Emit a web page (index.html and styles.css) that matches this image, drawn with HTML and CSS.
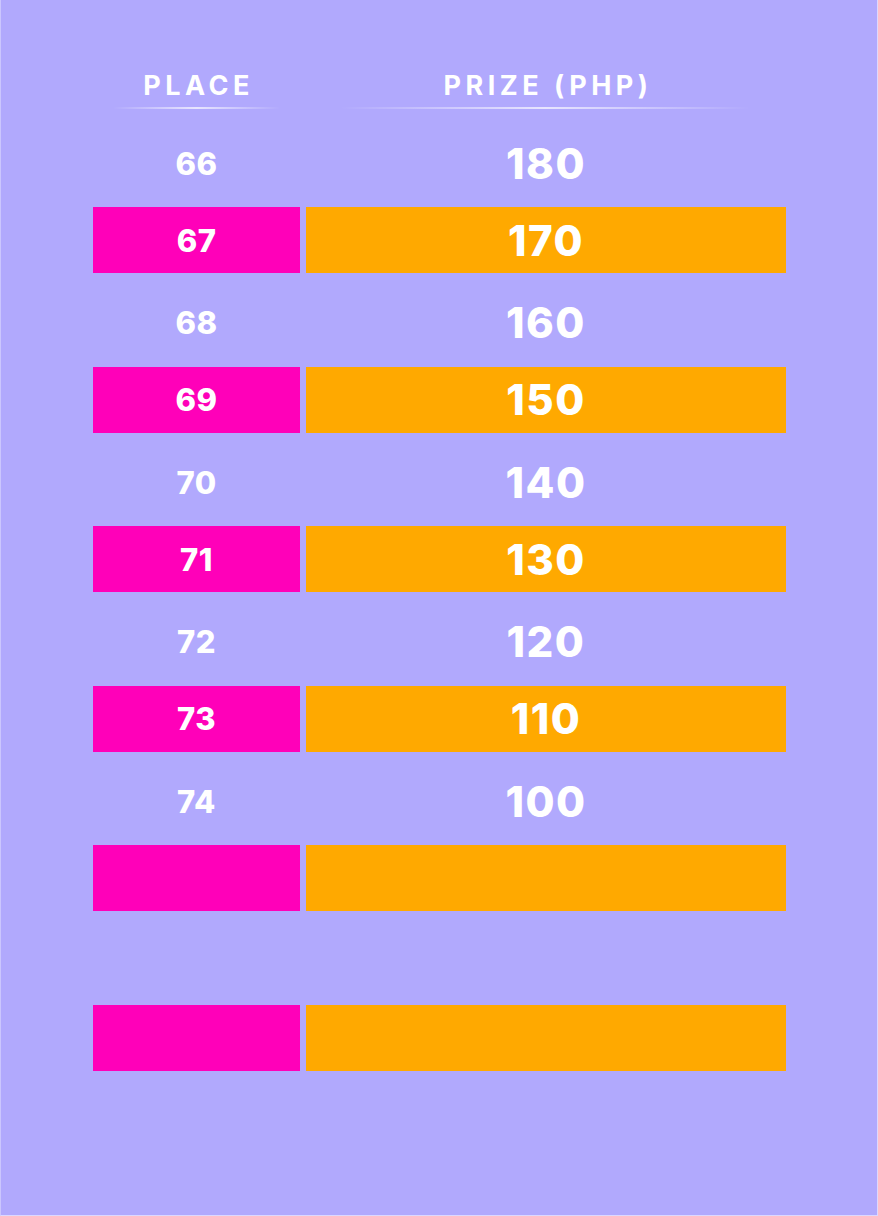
FILE: index.html
```html
<!DOCTYPE html>
<html lang="en">
<head>
<meta charset="utf-8">
<title>Prize table</title>
<link rel="stylesheet" href="styles.css">
</head>
<body>
<main class="panel">
  <div class="table">
    <div class="head">
      <div class="head-cell head-place">PLACE</div>
      <div class="head-cell head-prize">PRIZE (PHP)</div>
    </div>
    <div class="row plain"><div class="cell place">66</div><div class="cell prize">180</div></div>
    <div class="row bar"><div class="cell place">67</div><div class="cell prize">170</div></div>
    <div class="row plain"><div class="cell place">68</div><div class="cell prize">160</div></div>
    <div class="row bar"><div class="cell place">69</div><div class="cell prize">150</div></div>
    <div class="row plain"><div class="cell place">70</div><div class="cell prize">140</div></div>
    <div class="row bar"><div class="cell place">71</div><div class="cell prize">130</div></div>
    <div class="row plain"><div class="cell place">72</div><div class="cell prize">120</div></div>
    <div class="row bar"><div class="cell place">73</div><div class="cell prize">110</div></div>
    <div class="row plain"><div class="cell place">74</div><div class="cell prize">100</div></div>
    <div class="row bar"><div class="cell place"></div><div class="cell prize"></div></div>
    <div class="row plain"><div class="cell place"></div><div class="cell prize"></div></div>
    <div class="row bar"><div class="cell place"></div><div class="cell prize"></div></div>
  </div>
</main>
</body>
</html>
```
FILE: styles.css
```css
html, body {
  margin: 0;
  padding: 0;
  background: #e4e1ff;
}
.panel {
  box-sizing: border-box;
  width: 878px;
  height: 1216px;
  background: #b1a9fd;
  border-left: 1px solid #cbc6fe;
  border-right: 1px solid #dcd8ff;
  border-bottom: 1px solid #dcd8ff;
  padding: 72px 0 0 92px;
  font-family: Inter, "Noto Sans", sans-serif;
  color: #ffffff;
}
.table {
  width: 693px;
  display: flex;
  flex-direction: column;
  gap: 13.75px;
}
.head {
  display: grid;
  grid-template-columns: 207px 480px;
  column-gap: 6px;
  margin-bottom: 4.5px;
}
.head-cell {
  font-size: 27px;
  font-weight: 700;
  letter-spacing: 4.5px;
  line-height: 28px;
  text-align: center;
  padding-bottom: 9px;
  padding-left: 4px;
  position: relative;
}
.head-cell::after {
  content: "";
  position: absolute;
  bottom: 0;
  height: 2px;
  background: linear-gradient(90deg, rgba(255,255,255,0) 0%, rgba(255,255,255,0.7) 50%, rgba(255,255,255,0) 100%);
}
.head-place::after { left: 20px; right: 20px; }
.head-prize::after { left: 34px; right: 36px; }
.row {
  display: grid;
  grid-template-columns: 207px 480px;
  column-gap: 6px;
  height: 66px;
}
.cell {
  display: flex;
  align-items: center;
  justify-content: center;
  font-weight: 800;
}
.place { font-size: 31px; letter-spacing: 0.5px; }
.prize { font-size: 42px; letter-spacing: 1.5px; }
.plain .cell { padding-top: 6px; }
.bar .place { background: #ff00b9; }
.bar .prize { background: #ffa900; }
```
